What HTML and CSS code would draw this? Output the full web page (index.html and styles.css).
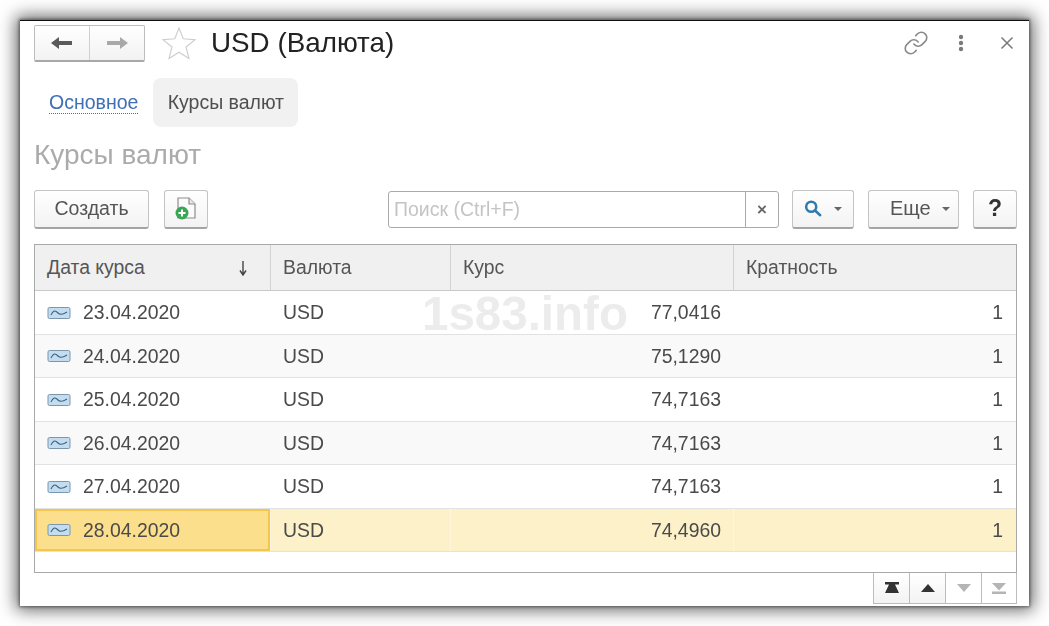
FILE: index.html
```html
<!DOCTYPE html>
<html lang="ru">
<head>
<meta charset="utf-8">
<title>USD (Валюта)</title>
<link rel="stylesheet" href="styles.css">
</head>
<body>
<div class="window">
  <header class="titlebar">
    <div class="nav">
      <button class="nav-btn"><svg width="26" height="18" viewBox="0 0 26 18"><path d="M2 9 L10 3 V7 H23 V11 H10 V15 Z" fill="#5a5a5a"/></svg></button>
      <button class="nav-btn"><svg width="26" height="18" viewBox="0 0 26 18"><path d="M24 9 L16 3 V7 H3 V11 H16 V15 Z" fill="#a9a9a9"/></svg></button>
    </div>
    <svg class="star" width="36" height="34" viewBox="0 0 36 34"><path d="M18 2 L22.2 12.8 L34 13.6 L25 21 L28 32.5 L18 26.2 L8 32.5 L11 21 L2 13.6 L13.8 12.8 Z" fill="none" stroke="#cdcdcd" stroke-width="1.1"/></svg>
    <h1 class="title">USD (Валюта)</h1>
    <div class="win-icons">
      <svg width="26" height="26" viewBox="0 0 24 24" fill="none" stroke="#8a8a8a" stroke-width="1.5" stroke-linecap="round"><path d="M10 13a5 5 0 0 0 7.54.54l3-3a5 5 0 0 0-7.07-7.07l-1.72 1.71"/><path d="M14 11a5 5 0 0 0-7.54-.54l-3 3a5 5 0 0 0 7.07 7.07l1.71-1.71"/></svg>
      <svg width="6" height="18" viewBox="0 0 6 18" fill="#7a7a7a"><circle cx="3" cy="3" r="2.2"/><circle cx="3" cy="9" r="2.2"/><circle cx="3" cy="15" r="2.2"/></svg>
      <svg width="14" height="14" viewBox="0 0 14 14" stroke="#777" stroke-width="1.5"><path d="M1.5 1.5 L12.5 12.5 M12.5 1.5 L1.5 12.5"/></svg>
    </div>
  </header>
  <nav class="tabs">
    <a class="tab-link">Основное</a>
    <span class="tab-active">Курсы валют</span>
  </nav>
  <h2 class="section">Курсы валют</h2>
  <div class="toolbar">
    <button class="btn btn-create">Создать</button>
    <button class="btn btn-new">
      <svg width="24" height="28" viewBox="0 0 24 28"><path d="M4 3 H15 L21 9 V23 H4 Z" fill="#fbfbfb" stroke="#8d8d8d" stroke-width="1.2"/><path d="M15 3 V9 H21" fill="#e8e8e8" stroke="#8d8d8d" stroke-width="1.2"/><circle cx="8" cy="18" r="6.5" fill="#3aa655"/><path d="M8 14.5 V21.5 M4.5 18 H11.5" stroke="#fff" stroke-width="2"/></svg>
    </button>
    <div class="search">
      <span class="search-text">Поиск (Ctrl+F)</span>
      <span class="search-clear">×</span>
    </div>
    <button class="btn btn-find">
      <svg width="18" height="19" viewBox="0 0 20 20" fill="none" stroke="#2f7bb0" stroke-width="2.8"><circle cx="8" cy="8" r="5.6"/><path d="M12 12 L18 17.5" stroke-linecap="round"/></svg>
      <i class="caret"></i>
    </button>
    <button class="btn btn-more">Еще<i class="caret"></i></button>
    <button class="btn btn-help">?</button>
  </div>
  <div class="table">
    <div class="row head">
      <div class="cell first">Дата курса<svg class="sort" width="10" height="16" viewBox="0 0 10 16"><path d="M5 1 V14 M2 10.5 L5 15 L8 10.5" fill="none" stroke="#444" stroke-width="1.4"/></svg></div>
      <div class="cell">Валюта</div>
      <div class="cell">Курс</div>
      <div class="cell">Кратность</div>
    </div>
    <div class="row">
      <div class="cell first"><svg class="ico" width="24" height="14" viewBox="0 0 24 14"><rect x="1" y="1.5" width="22" height="11" rx="1.5" fill="#c3dcf0" stroke="#7c97ad"/><path d="M4 9 C7 3 9 5 11 7 S15 9 20 6" fill="none" stroke="#35607f" stroke-width="1.1"/></svg>23.04.2020</div>
      <div class="cell">USD</div><div class="cell num">77,0416</div><div class="cell num">1</div>
    </div>
    <div class="row alt">
      <div class="cell first"><svg class="ico" width="24" height="14" viewBox="0 0 24 14"><rect x="1" y="1.5" width="22" height="11" rx="1.5" fill="#c3dcf0" stroke="#7c97ad"/><path d="M4 9 C7 3 9 5 11 7 S15 9 20 6" fill="none" stroke="#35607f" stroke-width="1.1"/></svg>24.04.2020</div>
      <div class="cell">USD</div><div class="cell num">75,1290</div><div class="cell num">1</div>
    </div>
    <div class="row">
      <div class="cell first"><svg class="ico" width="24" height="14" viewBox="0 0 24 14"><rect x="1" y="1.5" width="22" height="11" rx="1.5" fill="#c3dcf0" stroke="#7c97ad"/><path d="M4 9 C7 3 9 5 11 7 S15 9 20 6" fill="none" stroke="#35607f" stroke-width="1.1"/></svg>25.04.2020</div>
      <div class="cell">USD</div><div class="cell num">74,7163</div><div class="cell num">1</div>
    </div>
    <div class="row alt">
      <div class="cell first"><svg class="ico" width="24" height="14" viewBox="0 0 24 14"><rect x="1" y="1.5" width="22" height="11" rx="1.5" fill="#c3dcf0" stroke="#7c97ad"/><path d="M4 9 C7 3 9 5 11 7 S15 9 20 6" fill="none" stroke="#35607f" stroke-width="1.1"/></svg>26.04.2020</div>
      <div class="cell">USD</div><div class="cell num">74,7163</div><div class="cell num">1</div>
    </div>
    <div class="row">
      <div class="cell first"><svg class="ico" width="24" height="14" viewBox="0 0 24 14"><rect x="1" y="1.5" width="22" height="11" rx="1.5" fill="#c3dcf0" stroke="#7c97ad"/><path d="M4 9 C7 3 9 5 11 7 S15 9 20 6" fill="none" stroke="#35607f" stroke-width="1.1"/></svg>27.04.2020</div>
      <div class="cell">USD</div><div class="cell num">74,7163</div><div class="cell num">1</div>
    </div>
    <div class="row selected">
      <div class="cell first current"><svg class="ico" width="24" height="14" viewBox="0 0 24 14"><rect x="1" y="1.5" width="22" height="11" rx="1.5" fill="#c3dcf0" stroke="#7c97ad"/><path d="M4 9 C7 3 9 5 11 7 S15 9 20 6" fill="none" stroke="#35607f" stroke-width="1.1"/></svg>28.04.2020</div>
      <div class="cell">USD</div><div class="cell num">74,4960</div><div class="cell num">1</div>
    </div>
    <div class="watermark">1s83.info</div>
  </div>
  <div class="pager">
    <button class="pg"><svg width="16" height="12" viewBox="0 0 16 12" fill="#333"><path d="M1 0 H15 V2.6 H11 L15 11 H1 L5 2.6 H1 Z"/></svg></button>
    <button class="pg"><svg width="16" height="10" viewBox="0 0 16 10" fill="#333"><path d="M8 1 L15 9 H1 Z"/></svg></button>
    <button class="pg"><svg width="16" height="10" viewBox="0 0 16 10" fill="#b5b5b5"><path d="M8 9 L15 1 H1 Z"/></svg></button>
    <button class="pg"><svg width="16" height="12" viewBox="0 0 16 12" fill="#b5b5b5"><path d="M8 8.5 L15 1 H1 Z M1 9.6 H15 V12 H1 Z"/></svg></button>
  </div>
</div>
</body>
</html>
```
FILE: styles.css
```css
* { box-sizing: border-box; }
html, body { margin: 0; height: 100%; background: #fff; overflow: hidden; }
body { padding: 20px; font-family: "Liberation Sans", Arial, sans-serif; color: #4a4a4a; }
.window {
  width: 1009px; height: 586px; background: #fff;
  border-top: 1.5px solid #111;
  box-shadow: 0 0 16px 4px rgba(0,0,0,.6), 0 0 3px 1px rgba(0,0,0,.45);
  padding: 0 12px 0 14px;
  filter: blur(.35px);
}
button { font-family: inherit; padding: 0; margin: 0; cursor: default; }

.titlebar { display: flex; align-items: center; height: 42px; padding-top: 2px; }
.nav { display: flex; width: 111px; height: 37px; border: 1px solid #bdbdbd; border-bottom: 2px solid #a8a8a8; border-radius: 2px; background: linear-gradient(#fff, #f2f2f2); }
.nav-btn { flex: 1; border: 0; background: none; display: flex; align-items: center; justify-content: center; }
.nav-btn + .nav-btn { border-left: 1px solid #cfcfcf; }
.star { margin-left: 16px; }
.title { margin: 0 0 0 14px; font-size: 27.8px; font-weight: 400; color: #222; flex: 1; }
.win-icons { display: flex; align-items: center; margin-right: 3px; }
.win-icons svg:nth-child(1) { margin-right: 29px; }
.win-icons svg:nth-child(2) { margin-right: 36px; }

.tabs { display: flex; align-items: center; height: 49px; margin-top: 15px; font-size: 19.5px; }
.tab-link { color: #3f6fb5; border-bottom: 1px dotted #3f6fb5; margin-left: 15px; line-height: 22px; }
.tab-active { margin-left: 15px; width: 145px; height: 49px; line-height: 49px; text-align: center; background: #f1f1f1; border-radius: 8px; color: #4f4f4f; }

.section { margin: 9px 0 0; height: 53.5px; font-size: 28px; font-weight: 400; color: #ababab; line-height: 38px; }

.toolbar { display: flex; align-items: center; height: 39px; font-size: 19.5px; margin-bottom: 15.5px; }
.btn { height: 39px; border: 1px solid #c4c4c4; border-bottom: 2px solid #a4a4a4; border-radius: 3px; background: linear-gradient(#fff, #f3f3f3); color: #555; font-size: 19.5px; display: flex; align-items: center; justify-content: center; }
.btn-create { width: 115px; }
.btn-new { width: 44px; margin-left: 15px; }
.search { width: 391px; height: 37px; margin-left: 180px; border: 1px solid #aaa; border-radius: 3px; display: flex; align-items: center; }
.search-text { flex: 1; color: #c4c4c4; padding-left: 5px; }
.search-clear { width: 33px; height: 100%; border-left: 1px solid #aaa; text-align: center; line-height: 35px; color: #666; font-weight: 700; font-size: 17px; }
.btn-find { width: 62px; margin-left: 13px; gap: 12px; }
.btn-more { width: 91px; margin-left: 14px; gap: 11px; font-size: 20px; justify-content: flex-start; padding-left: 21px; }
.btn-help { width: 44px; margin-left: 14px; font-weight: 700; font-size: 23px; color: #333; }
.caret { width: 0; height: 0; border: 4px solid transparent; border-top: 4px solid #666; border-bottom: 0; }

.table { position: relative; height: 329px; width: 983px; border: 1px solid #a9a9a9; font-size: 19.4px; }
.row { display: grid; grid-template-columns: 235px 180px 283px 1fr; height: 43.5px; border-bottom: 1px solid #e2e2e2; }
.row.alt { background: #f9f9f9; }
.row.head { height: 46px; background: #f0f0f0; border-bottom: 1px solid #c9c9c9; }
.cell { display: flex; align-items: center; padding: 1px 12px 0; border-left: 1px solid transparent; color: #4a4a4a; }
.head .cell { border-left-color: #d3d3d3; color: #555; padding-top: 0; }
.head .cell:first-child { border-left: 0; }
.cell.first { border-left: 0; }
.num { justify-content: flex-end; }
.num:last-child { padding-right: 13px; }
.sort { margin-left: auto; margin-right: 10px; }
.ico { margin-right: 12px; }
.selected { background: #fdf1c9; }
.selected .cell + .cell { border-left-color: #fff6dd; }
.current { background: #fbdf8d; box-shadow: inset 0 0 0 2px #f5c64d; }
.watermark { position: absolute; left: 387px; top: 45px; font-size: 47.5px; font-weight: 700; color: #ececec; line-height: 48px; }

.pager { display: flex; justify-content: flex-end; width: 983px; }
.pg { width: 36px; height: 31px; border: 1px solid #bcbcbc; border-top: 0; border-right-width: 0; background: #fff; display: flex; align-items: center; justify-content: center; }
.pg:last-child { border-right-width: 1px; }
.pg:nth-child(-n+2) { background: linear-gradient(#fff, #f3f3f3); }
```
